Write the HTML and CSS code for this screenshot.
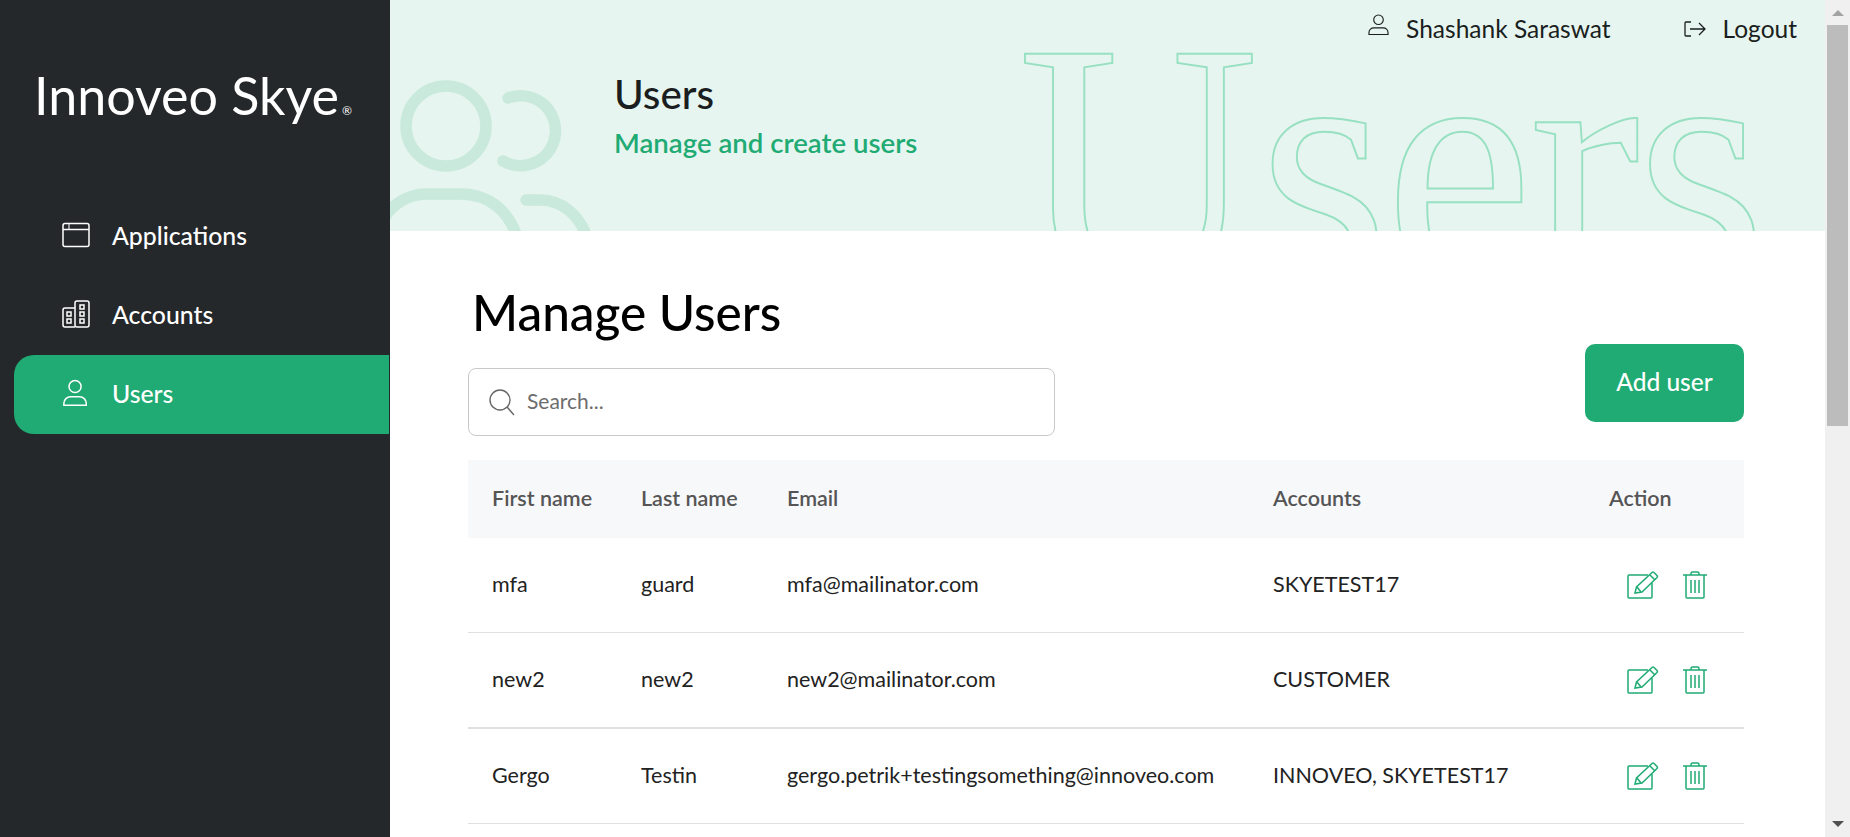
FILE: index.html
```html
<!DOCTYPE html>
<html lang="en">
<head>
<meta charset="utf-8">
<title>Users</title>
<link rel="stylesheet" href="styles.css">
</head>
<body>
<svg class="defs" aria-hidden="true">
  <symbol id="i-edit" viewBox="0 0 32 28"><path d="M21 4H2a1 1 0 0 0-1 1v21a1 1 0 0 0 1 1h22a1 1 0 0 0 1-1V12"/><path d="M8 22l1.500-6L25 1.500a1.500 1.500 0 0 1 2 0l3 3a1.500 1.500 0 0 1 0 2L15 21z"/><path d="M23 4l5 5M10 16l4 5"/></symbol>
  <symbol id="i-trash" viewBox="0 0 24 28"><path d="M0 4h24M8 4V2.500A1.500 1.500 0 0 1 9.500 1h5A1.500 1.500 0 0 1 16 2.500V4"/><path d="M3 4v22a1 1 0 0 0 1 1h16a1 1 0 0 0 1-1V4"/><path d="M8 9v13M12 9v13M16 9v13"/></symbol>
</svg>
<div class="app">
  <aside class="sidebar">
    <div class="logo">Innoveo Skye<span class="reg">®</span></div>
    <nav class="nav">
      <a class="nav-item">
        <svg class="nav-icon" viewBox="0 0 28 25" fill="none" stroke="currentColor" stroke-width="1.5"><rect x="1" y="1" width="26" height="23" rx="2"/><path d="M1 7h26"/><path d="M7 1v6" stroke-width="1"/></svg>
        <span>Applications</span>
      </a>
      <a class="nav-item">
        <svg class="nav-icon" viewBox="0 0 28 28" fill="none" stroke="currentColor" stroke-width="1.5"><rect x="13" y="1" width="14" height="26" rx="2"/><path d="M13 8H3a2 2 0 0 0-2 2v15a2 2 0 0 0 2 2h10"/><rect x="18" y="5" width="4" height="4"/><rect x="18" y="12" width="4" height="4"/><rect x="18" y="19" width="4" height="4"/><rect x="5" y="12" width="4" height="4"/><rect x="5" y="19" width="4" height="4"/></svg>
        <span>Accounts</span>
      </a>
      <a class="nav-item active">
        <svg class="nav-icon" viewBox="0 0 28 30" fill="none" stroke="currentColor" stroke-width="1.6"><circle cx="13" cy="8" r="6.5"/><path d="M1 28v-2c0-4 3.500-7 7-7h10c3.500 0 7 3 7 7v2z"/></svg>
        <span>Users</span>
      </a>
    </nav>
  </aside>
  <div class="main">
    <header class="banner">
      <svg class="banner-art" viewBox="0 0 200 231" fill="none" stroke="#c9e9dc" stroke-width="11.500" stroke-linecap="round"><circle cx="56" cy="126" r="40"/><path d="M118 98A35 35 0 1 1 113 161"/><path d="M-8 222C0 205 18 194 36 194H70C100 194 120 212 128 240"/><path d="M136 200H150C172 200 190 215 198 240"/></svg>
      <div class="ghost"><span class="ghost-cap">U</span>sers</div>
      <div class="topbar">
        <span class="top-link">
          <svg class="top-icon" viewBox="0 0 22 24" fill="none" stroke="currentColor" stroke-width="1.200"><circle cx="11" cy="6.500" r="5"/><path d="M1 22v-2c0-3 2.500-5 5-5h10c2.500 0 5 2 5 5v2z"/></svg>
          Shashank Saraswat
        </span>
        <span class="top-link">
          <svg class="logout-icon" viewBox="0 0 22 16" fill="none" stroke="currentColor" stroke-width="1.300"><path d="M7 1H2a1 1 0 0 0-1 1v12a1 1 0 0 0 1 1h5"/><path d="M6 8h15M15 2l6 6-6 6"/></svg>
          Logout
        </span>
      </div>
      <div class="banner-title">
        <h1>Users</h1>
        <p>Manage and create users</p>
      </div>
    </header>
    <section class="content">
      <h2>Manage Users</h2>
      <div class="toolbar">
        <label class="search">
          <svg class="search-icon" viewBox="0 0 26 27" fill="none" stroke="#666" stroke-width="1.400"><circle cx="11" cy="11" r="10"/><path d="M18 18l7 8"/></svg>
          <input type="text" placeholder="Search...">
        </label>
        <button class="add">Add user</button>
      </div>
      <table class="users">
        <colgroup><col class="c1"><col class="c2"><col class="c3"><col class="c4"><col class="c5"></colgroup>
        <thead>
          <tr><th>First name</th><th>Last name</th><th>Email</th><th>Accounts</th><th>Action</th></tr>
        </thead>
        <tbody>
          <tr><td>mfa</td><td>guard</td><td>mfa@mailinator.com</td><td>SKYETEST17</td><td class="actions"><svg class="edit"><use href="#i-edit"/></svg><svg class="trash"><use href="#i-trash"/></svg></td></tr>
          <tr class="thick"><td>new2</td><td>new2</td><td>new2@mailinator.com</td><td>CUSTOMER</td><td class="actions"><svg class="edit"><use href="#i-edit"/></svg><svg class="trash"><use href="#i-trash"/></svg></td></tr>
          <tr><td>Gergo</td><td>Testin</td><td>gergo.petrik+testingsomething@innoveo.com</td><td>INNOVEO, SKYETEST17</td><td class="actions"><svg class="edit"><use href="#i-edit"/></svg><svg class="trash"><use href="#i-trash"/></svg></td></tr>
        </tbody>
      </table>
    </section>
  </div>
  <div class="scrollbar" aria-hidden="true">
    <div class="arrow-up"></div>
    <div class="thumb"></div>
    <div class="arrow-down"></div>
  </div>
</div>
</body>
</html>
```
FILE: styles.css
```css
* { box-sizing: border-box; }
html, body { margin: 0; height: 100%; overflow: hidden; }
body { font-family: "Lato", "Liberation Sans", sans-serif; color: #222; background: #fff; }
.defs { display: none; }
.app { display: flex; height: 100vh; }
.sidebar { width: 390px; flex: none; background: #25282b; padding: 65px 1px 0 14px; color: #fff; }
.logo { font-size: 52px; font-weight: 400; line-height: 60px; padding-left: 20px; white-space: nowrap; }
.reg { font-size: 12px; margin-left: 3px; }
.nav { margin-top: 56px; display: flex; flex-direction: column; }
.nav-item { height: 79px; display: flex; align-items: center; gap: 22px; padding: 0 0 3px 48px; font-size: 24.800px; font-weight: 500; border-radius: 20px 0 0 20px; }
.nav-item.active { background: #1fab73; }
.nav-icon { width: 28px; height: 28px; flex: none; }
.main { flex: 1; min-width: 0; overflow: hidden; }
.scrollbar { width: 25px; flex: none; background: #f0f0f0; display: flex; flex-direction: column; align-items: center; }
.arrow-up { width: 0; height: 0; margin-top: 10px; border: 6px solid transparent; border-top: 0; border-bottom-color: #a3a3a3; }
.thumb { width: 21px; height: 401px; margin-top: 9px; background: #bcbcbc; }
.arrow-down { width: 0; height: 0; margin-top: auto; margin-bottom: 10px; border: 6px solid transparent; border-bottom: 0; border-top-color: #505050; }
.banner { position: relative; height: 231px; background: #e6f5ef; overflow: hidden; }
.banner-art { position: absolute; left: 0; top: 0; width: 200px; height: 231px; }
.ghost { position: absolute; left: 628px; top: -19px; font-family: "Liberation Serif", serif; font-size: 350px; line-height: 368px; letter-spacing: -4px; color: transparent; -webkit-text-stroke: 2px #97e0c2; white-space: nowrap; transform: scaleX(0.953); transform-origin: left top; }
.ghost-cap { letter-spacing: 0; }
.topbar { position: absolute; top: 14px; right: 28px; display: flex; gap: 73px; font-size: 24.500px; align-items: center; color: #1a1e20; }
.top-link { display: flex; align-items: center; gap: 17px; }
.top-icon { width: 21px; height: 24px; flex: none; margin-top: -8px; }
.logout-icon { width: 22px; height: 16px; flex: none; }
.banner-title { position: absolute; left: 224px; top: 69px; }
.banner-title h1 { margin: 0; font-size: 40.400px; font-weight: 500; line-height: 50px; color: #1a1e20; }
.banner-title p { margin: 7px 0 0; font-size: 27.600px; font-weight: 600; line-height: 34px; color: #1fab73; }
.content { padding: 53px 81px 60px 78px; }
h2 { margin: 0 0 0 4px; font-size: 49.500px; font-weight: 500; line-height: 56px; color: #000; }
.toolbar { display: flex; justify-content: space-between; align-items: flex-start; margin-top: 4px; height: 116px; }
.search { margin-top: 24px; width: 587px; height: 68px; display: flex; align-items: center; gap: 12px; padding-left: 20px; border: 1px solid #c9c9c9; border-radius: 8px; }
.search-icon { width: 26px; height: 27px; flex: none; }
.search input { flex: 1; border: 0; outline: 0; padding: 0 0 3px; font: inherit; font-size: 21px; color: #222; background: none; }
.search input::placeholder { color: #6d6d6d; }
.add { width: 159px; height: 78px; padding: 0 0 3px; border: 0; border-radius: 10px; background: #1fab73; color: #fff; font: inherit; font-size: 24.500px; font-weight: 500; }
.users { width: 1276px; table-layout: fixed; border-collapse: separate; border-spacing: 0; }
.c1 { width: 149px; } .c2 { width: 146px; } .c3 { width: 486px; } .c4 { width: 336px; }
th { height: 78px; background: #f7f8fa; padding: 0 0 3px 24px; text-align: left; font-size: 21.500px; font-weight: 600; color: #555; }
td { height: 95px; padding: 0 0 2px 24px; font-size: 21.500px; color: #222; border-bottom: 1px solid #e0e0e0; white-space: nowrap; }
.thick td { height: 96px; border-bottom-width: 2px; }
.users td.actions { padding-left: 42px; }
.edit, .trash { fill: none; stroke: #1fab73; stroke-width: 1.500px; height: 28px; vertical-align: middle; }
.edit { width: 32px; }
.trash { width: 24px; margin-left: 24px; }
```
